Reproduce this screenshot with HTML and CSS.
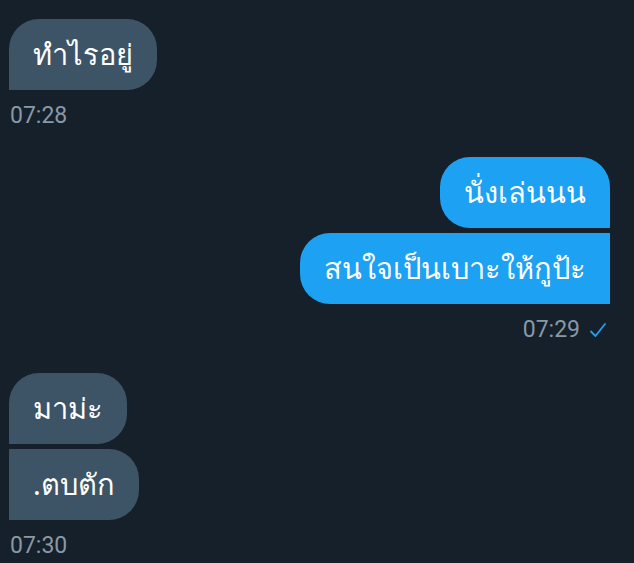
FILE: index.html
```html
<!DOCTYPE html>
<html lang="th">
<head>
<meta charset="utf-8">
<link rel="stylesheet" href="styles.css">
</head>
<body>
<div class="chat">
  <div class="group recv">
    <div class="bubble single">ทำไรอยู่</div>
    <div class="time">07:28</div>
  </div>
  <div class="group sent">
    <div class="bubble first">นั่งเล่นนน</div>
    <div class="bubble last">สนใจเป็นเบาะให้กูป้ะ</div>
    <div class="time">07:29 <svg class="check" width="18" height="16" viewBox="0 0 18 16"><path d="M2 9.5 L6.5 14 L16 2" fill="none" stroke="#1da1f2" stroke-width="1.8" stroke-linecap="round" stroke-linejoin="round"/></svg></div>
  </div>
  <div class="group recv later">
    <div class="bubble first">มาม่ะ</div>
    <div class="bubble last">.ตบตัก</div>
    <div class="time">07:30</div>
  </div>
</div>
</body>
</html>
```
FILE: styles.css
```css
html, body {
  margin: 0;
  padding: 0;
  background: #15202b;
}
body {
  width: 634px;
  height: 563px;
  overflow: hidden;
  font-family: "Noto Sans", sans-serif;
}
.chat {
  display: flex;
  flex-direction: column;
  padding: 19px 24px 0 9px;
}
.group {
  display: flex;
  flex-direction: column;
  gap: 5px;
}
.recv { align-items: flex-start; }
.sent { align-items: flex-end; margin-top: 29px; }
.recv.later { margin-top: 31px; }
.bubble {
  height: 71px;
  box-sizing: border-box;
  display: flex;
  align-items: center;
  padding: 0 24px;
  font-size: 29px;
  color: #ffffff;
  border-radius: 30px;
  white-space: nowrap;
}
.recv .bubble { background: #3d5466; }
.sent .bubble { background: #1da1f2; }
.recv .single { border-bottom-left-radius: 0; }
.recv .first { border-bottom-left-radius: 0; }
.recv .last { border-top-left-radius: 0; border-bottom-left-radius: 0; }
.sent .first { border-bottom-right-radius: 0; }
.sent .last { border-top-right-radius: 0; border-bottom-right-radius: 0; }
.time {
  display: flex;
  align-items: center;
  gap: 9px;
  margin-top: 9px;
  padding-left: 1px;
  font-family: Roboto, "Liberation Sans", sans-serif;
  font-size: 23px;
  color: #8899a6;
  line-height: 24px;
}
.sent .time { padding-right: 3px; }
```
